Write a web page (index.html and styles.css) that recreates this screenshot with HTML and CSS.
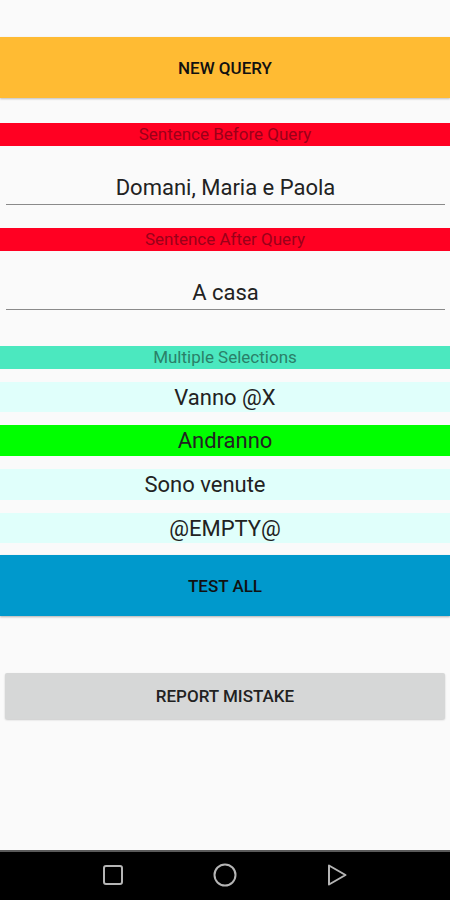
FILE: index.html
```html
<!DOCTYPE html>
<html>
<head>
<meta charset="utf-8">
<link rel="stylesheet" href="styles.css">
</head>
<body>
<div class="screen">
  <main class="app">
    <button class="btn btn-new">NEW QUERY</button>
    <div class="label label-red">Sentence Before Query</div>
    <div class="field">Domani, Maria e Paola</div>
    <div class="label label-red label-after">Sentence After Query</div>
    <div class="field">A casa</div>
    <div class="label label-teal">Multiple Selections</div>
    <div class="options">
      <div class="opt">Vanno @X</div>
      <div class="opt opt-selected">Andranno</div>
      <div class="opt opt-shift">Sono venute</div>
      <div class="opt">@EMPTY@</div>
    </div>
    <button class="btn btn-test">TEST ALL</button>
    <button class="btn btn-report">REPORT MISTAKE</button>
  </main>
  <nav class="navbar">
    <svg class="nav-icon" width="22" height="22" viewBox="0 0 22 22"><rect x="2" y="2" width="18" height="18" rx="2" fill="none" stroke="#b5b5b5" stroke-width="2"/></svg>
    <svg class="nav-icon" width="24" height="24" viewBox="0 0 24 24"><circle cx="12" cy="12" r="10.5" fill="none" stroke="#b5b5b5" stroke-width="2"/></svg>
    <svg class="nav-icon" width="22" height="24" viewBox="0 0 22 24"><path d="M3 2.5 L19.5 12 L3 21.5 Z" fill="none" stroke="#b5b5b5" stroke-width="2" stroke-linejoin="round"/></svg>
  </nav>
</div>
</body>
</html>
```
FILE: styles.css
```css
* { box-sizing: border-box; }
html, body { margin: 0; padding: 0; }
body {
  width: 450px;
  height: 900px;
  background: #fafafa;
  font-family: Roboto, "Liberation Sans", sans-serif;
  overflow: hidden;
}
.screen {
  display: flex;
  flex-direction: column;
  height: 900px;
}
.app {
  flex: 1;
  display: flex;
  flex-direction: column;
  padding-top: 37px;
}
.btn {
  border: none;
  font-family: Roboto, "Liberation Sans", sans-serif;
  font-weight: 500;
  font-size: 17px;
  color: #111;
  display: flex;
  align-items: center;
  justify-content: center;
  padding: 0;
}
.btn-new {
  height: 61px;
  background: #ffbb33;
  box-shadow: 0 1px 2px rgba(0,0,0,0.25);
}
.label {
  height: 23px;
  display: flex;
  align-items: center;
  justify-content: center;
  font-size: 17px;
  line-height: 1;
}
.label-red {
  margin-top: 25px;
  background: #ff0022;
  color: #9a0019;
}
.label-after { margin-top: 23px; }
.label-teal {
  margin-top: 36px;
  background: #4be8bf;
  color: #2a8068;
}
.field {
  height: 59px;
  margin: 0 5px 0 6px;
  border-bottom: 1.5px solid #8a8a8a;
  display: flex;
  align-items: flex-end;
  justify-content: center;
  padding-bottom: 4px;
  font-size: 22px;
  color: #222;
}
.options {
  display: flex;
  flex-direction: column;
  gap: 13px;
  margin-top: 13px;
}
.opt {
  height: 30px;
  background: #e0fffb;
  display: flex;
  align-items: center;
  justify-content: center;
  font-size: 22px;
  color: #222;
}
.opt-selected {
  height: 31px;
  background: #00ff00;
}
.opt-shift { padding-right: 40px; height: 31px; }
.btn-test {
  margin-top: 12px;
  height: 61px;
  background: #0099cc;
  box-shadow: 0 1px 2px rgba(0,0,0,0.3);
}
.btn-report {
  margin: 57px 5px 0 5px;
  height: 46px;
  background: #d6d7d7;
  border-radius: 2px;
  box-shadow: 0 1px 2px rgba(0,0,0,0.2);
  color: #222;
}
.navbar {
  height: 50px;
  background: #000;
  border-top: 2px solid #5a5a5a;
  display: flex;
  align-items: center;
  justify-content: space-between;
  padding: 0 102px 2px 102px;
}
```
